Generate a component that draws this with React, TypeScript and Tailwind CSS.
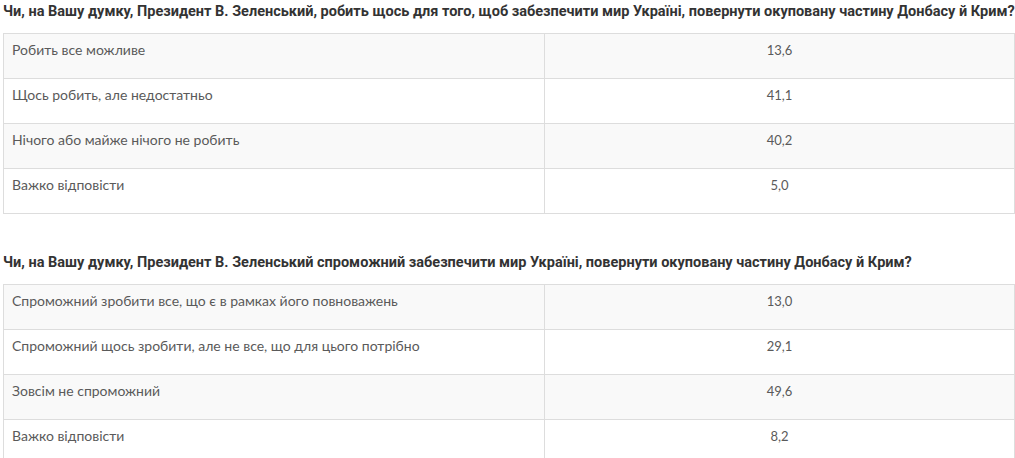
const TABLES = [
  {
    question:
      'Чи, на Вашу думку, Президент В. Зеленський, робить щось для того, щоб забезпечити мир Україні, повернути окуповану частину Донбасу й Крим?',
    rows: [
      ['Робить все можливе', '13,6'],
      ['Щось робить, але недостатньо', '41,1'],
      ['Нічого або майже нічого не робить', '40,2'],
      ['Важко відповісти', '5,0'],
    ],
  },
  {
    question:
      'Чи, на Вашу думку, Президент В. Зеленський спроможний забезпечити мир Україні, повернути окуповану частину Донбасу й Крим?',
    rows: [
      ['Спроможний зробити все, що є в рамках його повноважень', '13,0'],
      ['Спроможний щось зробити, але не все, що для цього потрібно', '29,1'],
      ['Зовсім не спроможний', '49,6'],
      ['Важко відповісти', '8,2'],
    ],
  },
];

export default function App() {
  return (
    <div className="w-[1015px] h-[458px] overflow-hidden bg-white pl-[3px] pt-[2px]">
      {TABLES.map((table, i) => (
        <section key={i} className={i > 0 ? 'mt-[39px]' : ''}>
          <h2 className="font-['Roboto',sans-serif] font-bold text-[14.5px] leading-[20px] text-[#333] mb-[11px] whitespace-nowrap">
            {table.question}
          </h2>
          <table className="w-[1012px] border-collapse font-['Lato',sans-serif] text-[14px] text-[#5a5a5a]">
            <tbody>
              {table.rows.map(([label, value], j) => (
                <tr key={label} className={j % 2 === 0 ? 'bg-[#f9f9f9]' : 'bg-white'}>
                  <td className="w-[541px] h-[45px] border border-[#ddd] px-2 pt-[6px] align-top leading-[20px]">
                    {label}
                  </td>
                  <td className="h-[45px] border border-[#ddd] px-2 pt-[6px] align-top text-center leading-[20px] text-[13px]">
                    {value}
                  </td>
                </tr>
              ))}
            </tbody>
          </table>
        </section>
      ))}
    </div>
  );
}
